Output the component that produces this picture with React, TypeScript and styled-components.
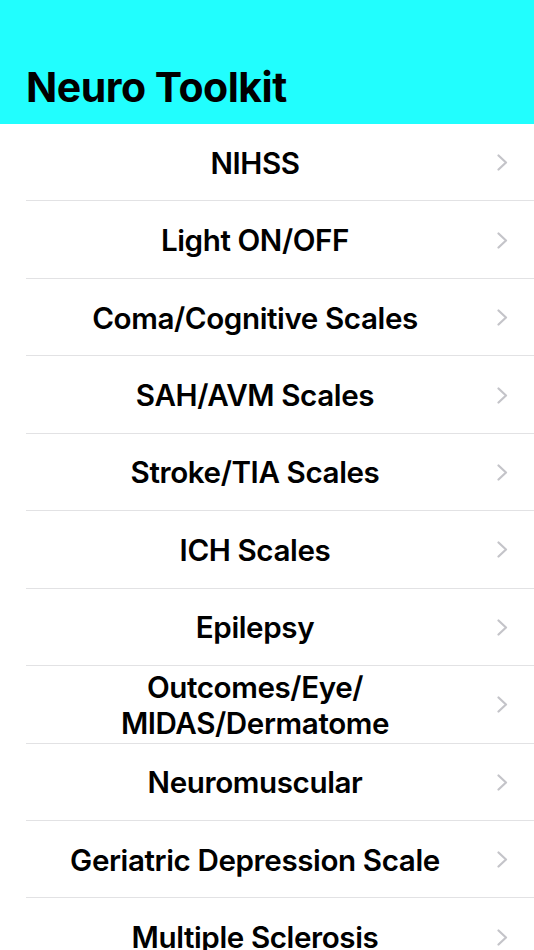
import styled, { createGlobalStyle } from "styled-components";

const GlobalStyle = createGlobalStyle`
  html, body {
    margin: 0;
    padding: 0;
    background: #ffffff;
  }
  body {
    font-family: Inter, "Liberation Sans", Arial, sans-serif;
    -webkit-font-smoothing: antialiased;
  }
`;

const items: string[][] = [
  ["NIHSS"],
  ["Light ON/OFF"],
  ["Coma/Cognitive Scales"],
  ["SAH/AVM Scales"],
  ["Stroke/TIA Scales"],
  ["ICH Scales"],
  ["Epilepsy"],
  ["Outcomes/Eye/", "MIDAS/Dermatome"],
  ["Neuromuscular"],
  ["Geriatric Depression Scale"],
  ["Multiple Sclerosis"],
];

const Chevron = () => (
  <svg width="11" height="17" viewBox="0 0 11 17" fill="none">
    <path
      d="M1.5 1.5 L9 8.5 L1.5 15.5"
      stroke="#c4c4c9"
      strokeWidth="2.2"
      strokeLinecap="round"
      strokeLinejoin="round"
    />
  </svg>
);

const App = () => {
  return (
    <>
      <GlobalStyle />
      <Screen>
        <Header>
          <Title>Neuro Toolkit</Title>
        </Header>
        <List>
          {items.map((lines) => (
            <Row key={lines.join("")}>
              <Label>
                {lines.map((line) => (
                  <Line key={line}>{line}</Line>
                ))}
              </Label>
              <Accessory>
                <Chevron />
              </Accessory>
            </Row>
          ))}
        </List>
      </Screen>
    </>
  );
};

export default App;

const Screen = styled.div`
  width: 534px;
  height: 950px;
  overflow: hidden;
  background: #ffffff;
`;

const Header = styled.header`
  height: 124px;
  box-sizing: border-box;
  background: #21fefe;
  display: flex;
  align-items: flex-end;
  padding: 0 26px 13px;
`;

const Title = styled.h1`
  margin: 0;
  font-size: 41px;
  font-weight: 700;
  letter-spacing: -0.5px;
  color: #000000;
  line-height: 48px;
`;

const List = styled.div`
  display: flex;
  flex-direction: column;
`;

const Row = styled.div`
  position: relative;
  display: flex;
  align-items: center;
  height: 77.45px;
  flex-shrink: 0;

  &::after {
    content: "";
    position: absolute;
    left: 26px;
    right: 0;
    bottom: 0;
    height: 1px;
    background: #e2e2e4;
  }
`;

const Label = styled.div`
  width: 510px;
  flex-shrink: 0;
  display: flex;
  flex-direction: column;
  align-items: center;
  font-size: 29.6px;
  font-weight: 560;
  letter-spacing: -0.4px;
  line-height: 36px;
  color: #000000;
`;

const Line = styled.span`
  white-space: nowrap;
`;

const Accessory = styled.div`
  display: flex;
  align-items: center;
  margin-left: -13px;
`;
